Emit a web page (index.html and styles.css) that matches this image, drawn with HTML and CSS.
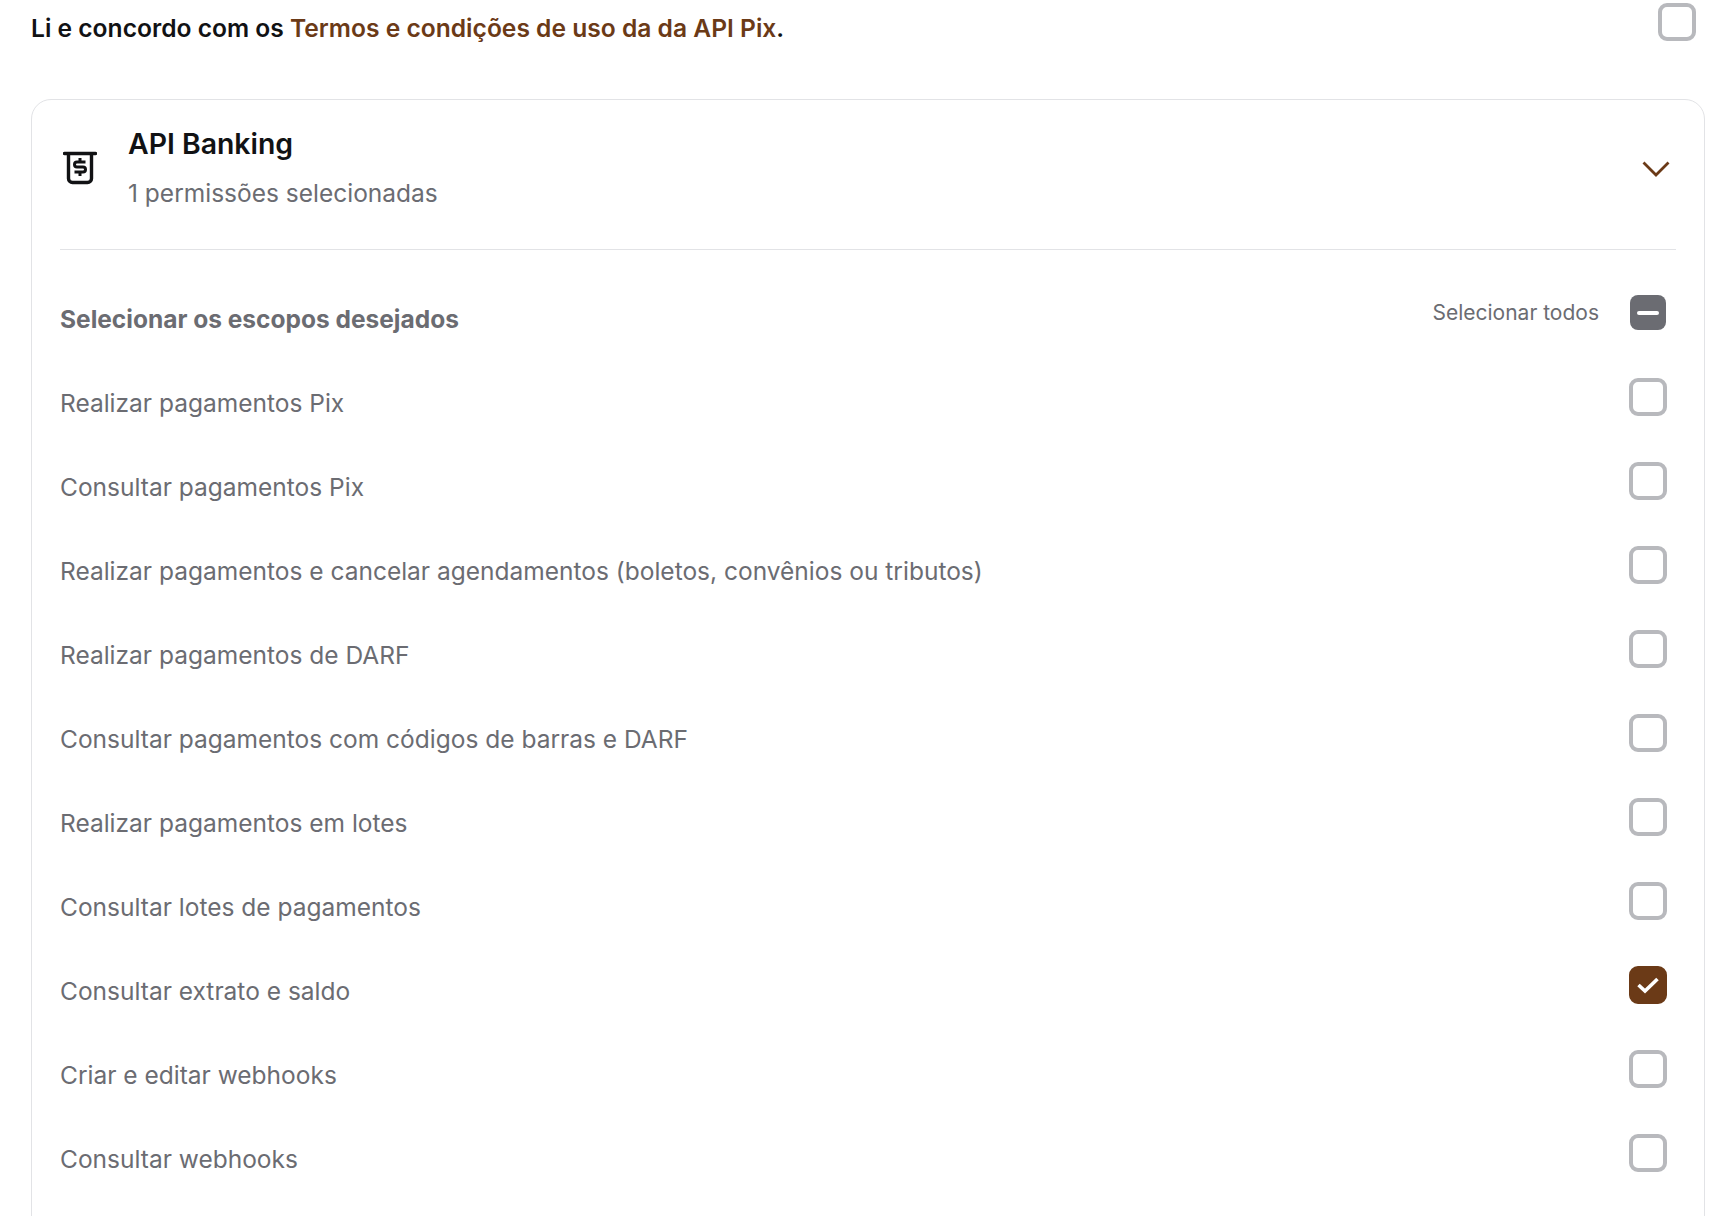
FILE: index.html
```html
<!DOCTYPE html>
<html lang="pt-BR">
<head>
    <meta charset="UTF-8">
    <meta name="viewport" content="width=device-width, initial-scale=1.0">
    <title>Permissões da API</title>
    <link rel="stylesheet" href="styles.css">
</head>
<body>
    <div class="terms">
        <p class="terms-text">Li e concordo com os <a href="#" class="terms-link">Termos e condições de uso da da API Pix</a>.</p>
        <span class="box"></span>
    </div>

    <section class="card">
        <header class="card-header">
            <svg class="card-icon" width="34" height="36" viewBox="0 0 34 36" fill="none" stroke="#111214" stroke-width="3.4">
                <path d="M1.5 3.5H32.5" stroke-linecap="round"/>
                <path d="M5.5 3.5V28.5a4 4 0 0 0 4 4h15a4 4 0 0 0 4-4V3.5"/>
                <path d="M17 8v3.5M17 22.5v3.5M22.5 12H14a2.5 2.5 0 0 0 0 5h6a2.5 2.5 0 0 1 0 5H11.5" stroke-width="3"/>
            </svg>
            <div class="card-title">
                <h2>API Banking</h2>
                <p>1 permissões selecionadas</p>
            </div>
            <svg class="chevron" width="28" height="16" viewBox="0 0 28 16" fill="none" stroke="#6b3a17" stroke-width="2.8">
                <path d="M1.5 1.5L14 14L26.5 1.5"/>
            </svg>
        </header>

        <div class="scopes">
            <div class="scopes-head">
                <h3>Selecionar os escopos desejados</h3>
                <div class="select-all">
                    <span>Selecionar todos</span>
                    <span class="box-mixed"><i></i></span>
                </div>
            </div>

            <div class="scope-row"><span class="scope-name">Realizar pagamentos Pix</span><span class="box"></span></div>
            <div class="scope-row"><span class="scope-name">Consultar pagamentos Pix</span><span class="box"></span></div>
            <div class="scope-row"><span class="scope-name">Realizar pagamentos e cancelar agendamentos (boletos, convênios ou tributos)</span><span class="box"></span></div>
            <div class="scope-row"><span class="scope-name">Realizar pagamentos de DARF</span><span class="box"></span></div>
            <div class="scope-row"><span class="scope-name">Consultar pagamentos com códigos de barras e DARF</span><span class="box"></span></div>
            <div class="scope-row"><span class="scope-name">Realizar pagamentos em lotes</span><span class="box"></span></div>
            <div class="scope-row"><span class="scope-name">Consultar lotes de pagamentos</span><span class="box"></span></div>
            <div class="scope-row">
                <span class="scope-name">Consultar extrato e saldo</span>
                <span class="box box-checked">
                    <svg width="22" height="18" viewBox="0 0 22 18" fill="none" stroke="#fff" stroke-width="3.6">
                        <path d="M1.5 9L8 15L20.5 3"/>
                    </svg>
                </span>
            </div>
            <div class="scope-row"><span class="scope-name">Criar e editar webhooks</span><span class="box"></span></div>
            <div class="scope-row"><span class="scope-name">Consultar webhooks</span><span class="box"></span></div>
        </div>
    </section>
</body>
</html>
```

FILE: styles.css
```css
html, body {
    height: 100%;
    overflow: hidden;
}
body {
    margin: 0;
    background-color: #fff;
    font-family: Inter, "Liberation Sans", sans-serif;
    color: #6b6c72;
}
h2, h3, p {
    margin: 0;
}
.terms {
    display: flex;
    justify-content: space-between;
    align-items: flex-start;
    padding: 3px 17px 0 31px;
    height: 99px;
    box-sizing: border-box;
}
.terms-text {
    font-size: 24.6px;
    font-weight: 600;
    line-height: 50px;
    color: #111214;
}
.terms-link {
    color: #6b3a17;
    text-decoration: none;
}
.box {
    display: flex;
    align-items: center;
    justify-content: center;
    flex: none;
    width: 38px;
    height: 38px;
    box-sizing: border-box;
    border: 4px solid #b8b9bd;
    border-radius: 9px;
}
.box-checked {
    background-color: #6b3a17;
    border-color: #6b3a17;
}
.box-mixed {
    display: flex;
    align-items: center;
    justify-content: center;
    width: 36px;
    height: 35px;
    margin-right: 1px;
    border-radius: 8px;
    background-color: #6b6c72;
}
.box-mixed i {
    display: block;
    width: 22px;
    height: 4px;
    border-radius: 2px;
    background-color: #fff;
}
.card {
    margin: 0 8px 0 31px;
    min-height: 1300px;
    border: 1px solid #e2e3e6;
    border-radius: 20px;
    padding: 0 28px;
}
.card-header {
    display: flex;
    align-items: center;
    height: 150px;
    padding-bottom: 13px;
    border-bottom: 1px solid #e2e3e6;
    box-sizing: border-box;
}
.card-icon {
    flex: none;
    margin: 0 31px 0 3px;
}
.card-title {
    flex: 1;
    margin-bottom: 2px;
}
.card-title h2 {
    font-size: 28.4px;
    font-weight: 600;
    line-height: 40px;
    color: #111214;
}
.card-title p {
    margin-top: 11px;
    font-size: 24.5px;
    line-height: 36px;
}
.chevron {
    flex: none;
    margin: 2px 6px 0 0;
}
.scopes {
    padding-top: 45px;
}
.scopes-head {
    display: flex;
    justify-content: space-between;
    align-items: flex-start;
    height: 36px;
    margin-bottom: 47px;
}
.scopes-head h3 {
    margin-top: 6px;
    font-size: 24.5px;
    font-weight: 700;
    line-height: 36px;
    color: #6b6c72;
}
.select-all {
    display: flex;
    align-items: center;
    gap: 31px;
    padding-right: 9px;
    font-size: 21px;
}
.scope-row {
    display: flex;
    justify-content: space-between;
    align-items: flex-start;
    height: 84px;
    padding-right: 9px;
    box-sizing: border-box;
}
.scope-name {
    margin-top: 7px;
    font-size: 24.5px;
    line-height: 36px;
}
```
